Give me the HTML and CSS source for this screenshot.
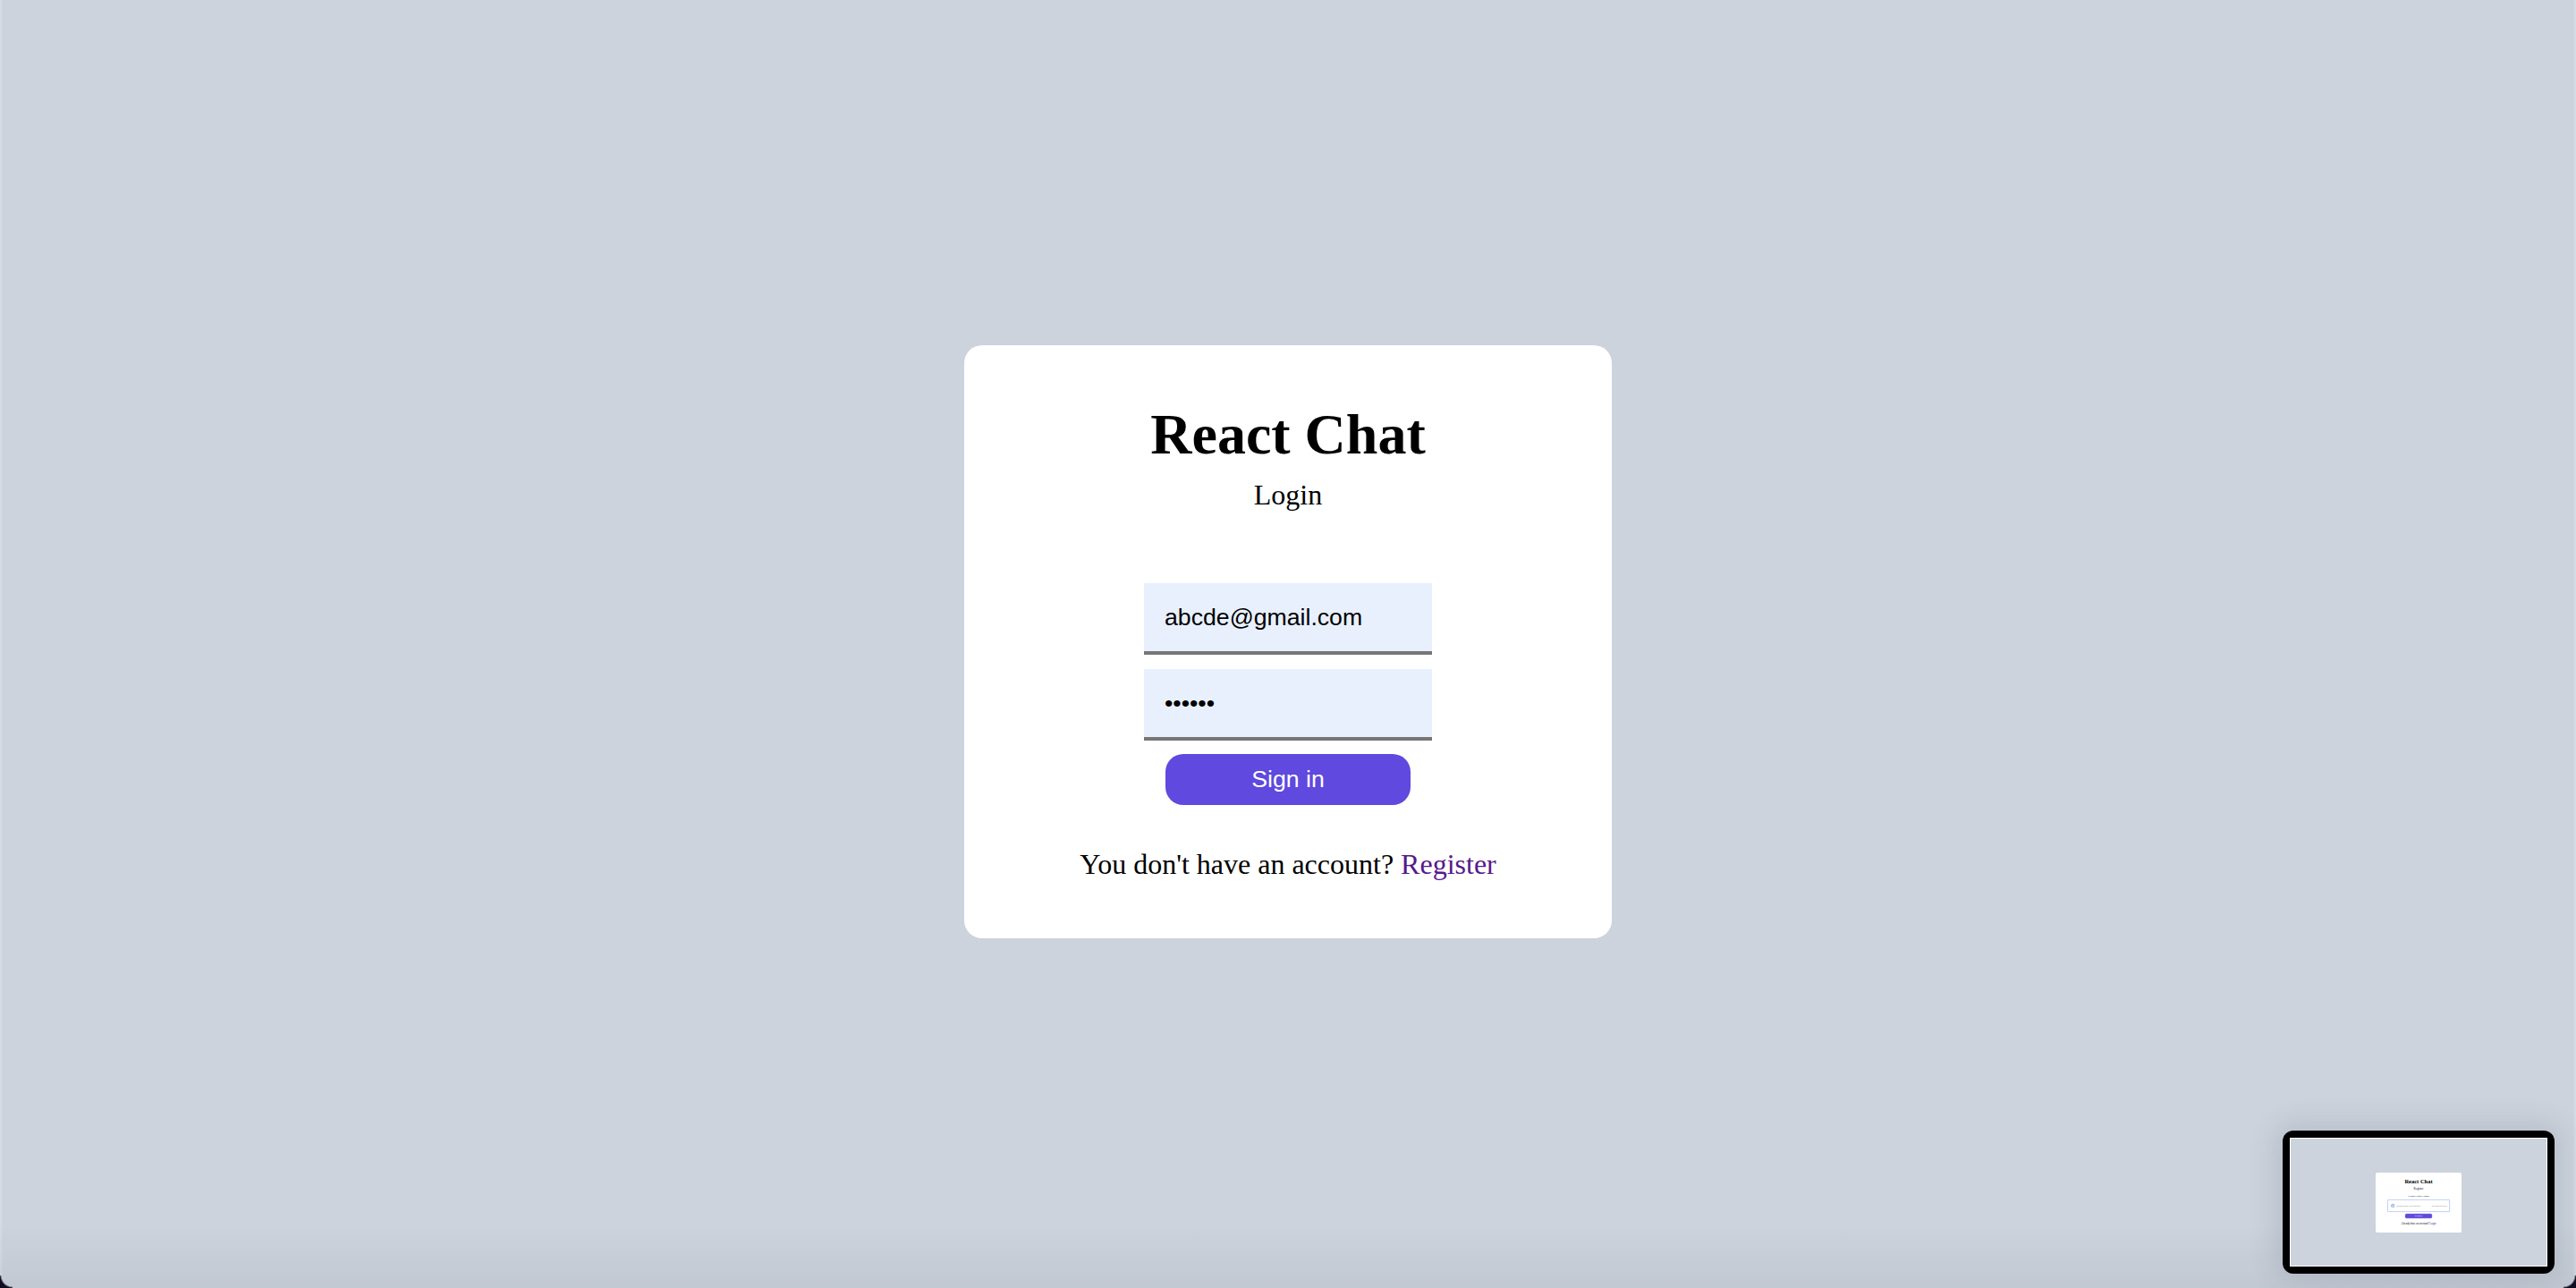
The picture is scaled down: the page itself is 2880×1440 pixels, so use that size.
FILE: index.html
```html
<!DOCTYPE html>
<html lang="en">
<head>
<meta charset="utf-8">
<title>React Chat - Login</title>
<link rel="stylesheet" href="styles.css">
</head>
<body>
<main class="screen">
  <section class="card">
    <h1 class="title">React Chat</h1>
    <p class="subtitle">Login</p>
    <form class="form">
      <input class="field" type="email" value="abcde@gmail.com">
      <input class="field field-pass" type="text" value="••••••">
      <button class="btn" type="button">Sign in</button>
    </form>
    <p class="footer">You don't have an account? <a class="link" href="#">Register</a></p>
  </section>
</main>

<div class="vignette"></div>

<div class="thumb">
  <div class="thumb-screen">
    <div class="mini-wrap">
      <div class="mini-card">
        <div class="mini-title">React Chat</div>
        <div class="mini-sub">Register</div>
        <div class="mini-label">Upload Profile Photo</div>
        <div class="mini-drop">
          <svg class="mini-icon" viewBox="0 0 24 24"><circle cx="12" cy="12" r="9" fill="none" stroke="#4c7be6" stroke-width="2.5"/><path d="M12 17V8M8 11l4-4 4 4" fill="none" stroke="#4c7be6" stroke-width="2.5"/></svg>
          <span class="mini-drop-text">Upload or drop a file right here</span>
          <span class="mini-drop-types">JPG,PNG,GIF,SVG</span>
        </div>
        <div class="mini-btn">Register</div>
        <div class="mini-foot">Already have an account? <span class="mini-link">Login</span></div>
      </div>
    </div>
  </div>
</div>

<div class="corner corner-left"></div>
<div class="corner corner-right"></div>
</body>
</html>
```

FILE: styles.css
```css
html, body {
  margin: 0;
  padding: 0;
}

body {
  background: #ccd3dc;
  font-family: "Liberation Serif", "Times New Roman", serif;
  color: #000;
  overflow: hidden;
}

.screen {
  box-sizing: border-box;
  min-height: 100vh;
  display: flex;
  align-items: center;
  justify-content: center;
  padding-bottom: 5px;
  border-left: 2px solid #d6dbe2;
  border-right: 2px solid #d6dbe2;
}

.card {
  box-sizing: border-box;
  width: 724px;
  background: #fff;
  border-radius: 20px;
  padding: 63px 0 64.5px;
  display: flex;
  flex-direction: column;
  align-items: center;
}

.title {
  margin: 0;
  font-size: 64px;
  line-height: 74px;
  font-weight: bold;
}

.subtitle {
  margin: 12px 0 0;
  font-size: 32px;
  line-height: 37px;
}

.form {
  margin-top: 80px;
  display: flex;
  flex-direction: column;
  align-items: center;
}

.field {
  box-sizing: border-box;
  width: 322px;
  height: 80px;
  margin: 0;
  padding: 0 23px;
  border: none;
  border-bottom: 4px solid #767676;
  background: #e8f0fe;
  font-family: "Liberation Sans", Arial, sans-serif;
  font-size: 26.67px;
  color: #000;
  outline: none;
}

.field + .field {
  margin-top: 16px;
}

.field-pass {
  letter-spacing: 0;
}

.btn {
  box-sizing: border-box;
  margin-top: 15px;
  width: 274px;
  height: 57px;
  border: none;
  border-radius: 20px;
  background: #5f49de;
  color: #fff;
  font-family: "Liberation Sans", Arial, sans-serif;
  font-size: 26.67px;
  padding: 0;
}

.footer {
  margin: 47.5px 0 0;
  font-size: 32px;
  line-height: 37px;
}

.link {
  color: #551a8b;
  text-decoration: none;
}

/* screen capture edge effects */
.vignette {
  position: fixed;
  left: 0;
  right: 0;
  bottom: 0;
  height: 70px;
  background: linear-gradient(to bottom, rgba(60, 70, 90, 0), rgba(60, 70, 90, 0.07));
  pointer-events: none;
}

/* screenshot thumbnail overlay */
.thumb {
  position: fixed;
  right: 24px;
  bottom: 16px;
  box-sizing: border-box;
  width: 304px;
  height: 160px;
  padding: 8px;
  background: #000;
  border-radius: 12px;
  box-shadow: 0 0 30px 8px rgba(60, 70, 90, 0.14);
}

.thumb-screen {
  box-sizing: border-box;
  width: 100%;
  height: 100%;
  border: 1.5px solid #fff;
  background: #ccd3dc;
  display: flex;
  align-items: center;
  justify-content: center;
}

.mini-wrap {
  width: 96px;
  height: 67px;
  position: relative;
}

.mini-card {
  position: absolute;
  left: 0;
  top: 0;
  box-sizing: border-box;
  width: 384px;
  height: 268px;
  transform: scale(0.25);
  transform-origin: 0 0;
  background: #fff;
  border-radius: 8px;
  display: flex;
  flex-direction: column;
  align-items: center;
  padding-top: 24px;
  font-family: "Liberation Serif", "Times New Roman", serif;
}

.mini-title {
  font-size: 26px;
  font-weight: bold;
  line-height: 30px;
}

.mini-sub {
  font-size: 13px;
  line-height: 15px;
  margin-top: 8px;
}

.mini-label {
  font-size: 11px;
  line-height: 13px;
  margin-top: 20px;
}

.mini-drop {
  box-sizing: border-box;
  margin-top: 10px;
  width: 280px;
  height: 56px;
  border: 3px solid #a9c0f2;
  border-radius: 4px;
  display: flex;
  align-items: center;
  padding: 0 10px 0 12px;
  font-family: "Liberation Sans", Arial, sans-serif;
  font-size: 8px;
  color: #777;
}

.mini-icon {
  width: 20px;
  height: 20px;
  margin-right: 6px;
}

.mini-drop-text {
  flex: 1;
}

.mini-btn {
  box-sizing: border-box;
  margin-top: 8px;
  width: 120px;
  height: 20px;
  border-radius: 6px;
  background: #5f49de;
  border: 2px solid #3e2bc0;
  color: #fff;
  font-family: "Liberation Sans", Arial, sans-serif;
  font-size: 9px;
  display: flex;
  align-items: center;
  justify-content: center;
}

.mini-foot {
  margin-top: 16px;
  font-size: 12px;
  line-height: 14px;
}

.mini-link {
  color: #551a8b;
}

.corner {
  position: fixed;
  bottom: 0;
  width: 14px;
  height: 14px;
  pointer-events: none;
}

.corner-left {
  left: 0;
  background: radial-gradient(circle at 100% 0, rgba(0, 0, 0, 0) 12px, #120c22 14px);
}

.corner-right {
  right: 0;
  background: radial-gradient(circle at 0 0, rgba(0, 0, 0, 0) 12px, #120c22 14px);
}
```
